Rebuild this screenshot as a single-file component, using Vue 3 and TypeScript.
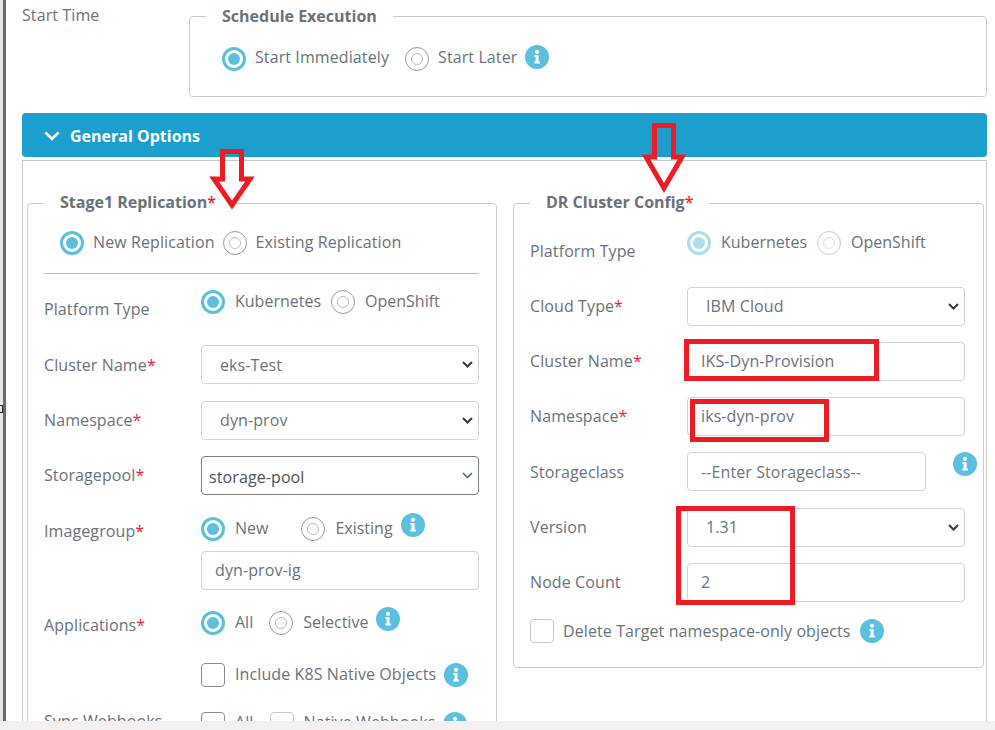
<template>
    <div class="screen">
        <span class="edge-tick"></span>
        <div class="page">
            <!-- Start time -->
            <div class="start-row">
                <div class="start-label">Start Time</div>
                <fieldset class="box box-start">
                    <legend>Schedule Execution</legend>
                    <div class="radios radios-start">
                        <label class="choice"><input v-model="schedule" type="radio" value="now" /><span>Start Immediately</span></label>
                        <label class="choice"><input v-model="schedule" type="radio" value="later" /><span>Start Later</span></label>
                        <svg class="info" viewBox="0 0 24 24"><use href="#info-glyph" /></svg>
                    </div>
                </fieldset>
            </div>

            <div class="bar">
                <svg class="chevron" viewBox="0 0 16 10"><path d="M1.5 1.5 8 8l6.5-6.5" /></svg>
                General Options
            </div>

            <div class="panel">
                <!-- Source side -->
                <fieldset class="box box-left">
                    <legend>Stage1 Replication<i>*</i></legend>
                    <div class="radios radios-tight replication">
                        <label class="choice"><input v-model="replication" type="radio" value="new" /><span>New Replication</span></label>
                        <label class="choice"><input v-model="replication" type="radio" value="existing" /><span>Existing Replication</span></label>
                    </div>
                    <hr />

                    <div class="row row-platform">
                        <div class="name name-platform">Platform Type</div>
                        <div class="radios radios-platform">
                            <label class="choice"><input v-model="platform" type="radio" value="k8s" /><span>Kubernetes</span></label>
                            <label class="choice"><input v-model="platform" type="radio" value="os" /><span>OpenShift</span></label>
                        </div>
                    </div>
                    <div class="row row-field first-field">
                        <div class="name">Cluster Name<i>*</i></div>
                        <select v-model="sourceCluster"><option>eks-Test</option></select>
                    </div>
                    <div class="row row-field">
                        <div class="name">Namespace<i>*</i></div>
                        <select v-model="sourceNamespace"><option>dyn-prov</option></select>
                    </div>
                    <div class="row row-field row-pool">
                        <div class="name">Storagepool<i>*</i></div>
                        <select v-model="storagePool" class="focused"><option>storage-pool</option></select>
                    </div>
                    <div class="row row-image">
                        <div class="name name-top">Imagegroup<i>*</i></div>
                        <div>
                            <div class="radios radios-wide">
                                <label class="choice"><input v-model="imageGroup" type="radio" value="new" /><span>New</span></label>
                                <label class="choice"><input v-model="imageGroup" type="radio" value="existing" /><span>Existing</span></label>
                                <svg class="info info-existing" viewBox="0 0 24 24"><use href="#info-glyph" /></svg>
                            </div>
                            <input class="text image-input" type="text" value="dyn-prov-ig" />
                        </div>
                    </div>
                    <div class="row row-apps">
                        <div class="name name-top">Applications<i>*</i></div>
                        <div class="radios">
                            <label class="choice"><input v-model="applications" type="radio" value="all" /><span>All</span></label>
                            <label class="choice"><input v-model="applications" type="radio" value="selective" /><span>Selective</span></label>
                            <svg class="info info-near" viewBox="0 0 24 24"><use href="#info-glyph" /></svg>
                        </div>
                    </div>
                    <div class="row row-native">
                        <div></div>
                        <label class="choice">
                            <input class="check" type="checkbox" /><span>Include K8S Native Objects</span>
                            <svg class="info info-check" viewBox="0 0 24 24"><use href="#info-glyph" /></svg>
                        </label>
                    </div>
                    <div class="row row-webhooks">
                        <div class="name">Sync Webhooks</div>
                        <div class="radios">
                            <label class="choice"><input class="check" type="checkbox" /><span>All</span></label>
                            <label class="choice">
                                <input class="check check-light" type="checkbox" /><span>Native Webhooks</span>
                                <svg class="info info-check" viewBox="0 0 24 24"><use href="#info-glyph" /></svg>
                            </label>
                        </div>
                    </div>
                </fieldset>

                <!-- DR side -->
                <fieldset class="box box-right">
                    <legend>DR Cluster Config<i>*</i></legend>
                    <div class="row dr-platform">
                        <div class="name name-dr">Platform Type</div>
                        <div class="radios radios-platform faded">
                            <label class="choice"><input v-model="drPlatform" type="radio" value="k8s" disabled /><span>Kubernetes</span></label>
                            <label class="choice"><input v-model="drPlatform" type="radio" value="os" disabled /><span>OpenShift</span></label>
                        </div>
                    </div>
                    <div class="row dr-cloud dr-up">
                        <div class="name">Cloud Type<i>*</i></div>
                        <select v-model="cloudType"><option>IBM Cloud</option></select>
                    </div>
                    <div class="row dr-field dr-up">
                        <div class="name">Cluster Name<i>*</i></div>
                        <input class="text" type="text" value="IKS-Dyn-Provision" />
                    </div>
                    <div class="row dr-field dr-up">
                        <div class="name">Namespace<i>*</i></div>
                        <input class="text" type="text" value="iks-dyn-prov" />
                    </div>
                    <div class="row dr-field">
                        <div class="name">Storageclass</div>
                        <div class="with-info">
                            <input class="text class-input" type="text" placeholder="--Enter Storageclass--" />
                            <svg class="info info-class" viewBox="0 0 24 24"><use href="#info-glyph" /></svg>
                        </div>
                    </div>
                    <div class="row dr-field dr-version dr-up">
                        <div class="name">Version</div>
                        <select v-model="version"><option>1.31</option></select>
                    </div>
                    <div class="row dr-field dr-up">
                        <div class="name">Node Count</div>
                        <input class="text" type="text" value="2" />
                    </div>
                    <label class="choice dr-delete">
                        <input class="check check-light" type="checkbox" /><span>Delete Target namespace-only objects</span>
                        <svg class="info" viewBox="0 0 24 24"><use href="#info-glyph" /></svg>
                    </label>
                </fieldset>
            </div>
        </div>
        <div class="footer"></div>

        <!-- Red markup drawn over the screenshot -->
        <svg class="markup" viewBox="0 0 995 730">
            <polygon points="222.5,151.5 241.5,151.5 241.5,179 250,179 232,205 214,179 222.5,179" />
            <polygon points="654.5,125.5 673.5,125.5 673.5,157 682,157 664,188 646,157 654.5,157" />
            <rect x="686.5" y="341.5" width="190" height="37" />
            <rect x="692.5" y="401.5" width="134" height="38" />
            <rect x="678.5" y="508.5" width="114" height="94" />
        </svg>

        <svg class="defs" width="0" height="0">
            <symbol id="info-glyph" viewBox="0 0 24 24">
                <circle cx="12" cy="12" r="12" fill="#5bc0de" />
                <circle cx="12" cy="6.8" r="2.1" fill="#fff" />
                <path d="M9.4 10h4.2v6.6h1.2v2H9.4v-2h1.2V12H9.4z" fill="#fff" />
            </symbol>
        </svg>
    </div>
</template>

<script setup lang="ts">
import { ref } from "vue";

const schedule = ref<string>("now");
const replication = ref<string>("new");
const platform = ref<string>("k8s");
const drPlatform = ref<string>("k8s");
const imageGroup = ref<string>("new");
const applications = ref<string>("all");

const sourceCluster = ref<string>("eks-Test");
const sourceNamespace = ref<string>("dyn-prov");
const storagePool = ref<string>("storage-pool");
const cloudType = ref<string>("IBM Cloud");
const version = ref<string>("1.31");
</script>

<style scoped>
.screen {
    position: relative;
    display: flex;
    flex-direction: column;
    width: 995px;
    height: 730px;
    overflow: hidden;
    background-color: #e6e6e6;
    font-family: "Open Sans", "Liberation Sans", sans-serif;
    font-size: 16px;
    line-height: 24px;
    letter-spacing: 0.1px;
    color: #69727b;
}

.edge-tick {
    position: absolute;
    left: 0;
    top: 405px;
    width: 2px;
    height: 6px;
    border: 1px solid #222;
    border-left: none;
}

.page {
    flex: 1;
    min-height: 0;
    overflow: hidden;
    margin-left: 3px;
    border-left: 3px solid #6a6a6a;
    padding: 4px 8px 0 16px;
    background-color: #fff;
}

.footer {
    height: 9px;
    background-color: #f4f0ef;
}

/* Top row */
.start-row {
    display: flex;
    align-items: flex-start;
}

.start-label {
    width: 167px;
    flex: none;
    margin-top: -1px;
}

.box {
    margin: 0;
    min-width: 0;
    border: 1px solid #c8ccd0;
    border-radius: 4px;
}

.box legend {
    padding: 0 16px;
    font-weight: 700;
    line-height: 24px;
    letter-spacing: 0;
    color: #69727b;
}

.panel legend {
    padding-bottom: 2px;
    line-height: 22px;
}

i {
    font-style: normal;
    color: #f5222d;
}

legend i {
    font-weight: 600;
}

.box-start {
    flex: 1;
    padding: 0 16px 25px;
}

.radios-start {
    margin: 19px 0 0 16px;
    gap: 18px;
}

.radios-start .choice span {
    margin-top: -2px;
}

/* Header bar */
.bar {
    display: flex;
    align-items: center;
    box-sizing: border-box;
    height: 44px;
    margin-top: 16px;
    padding: 1px 0 0 22px;
    border-radius: 4px;
    background-color: #1d9fcd;
    color: #fff;
    font-weight: 700;
    letter-spacing: 0;
}

.chevron {
    width: 16px;
    height: 10px;
    margin-right: 10px;
    fill: none;
    stroke: #fff;
    stroke-width: 2.6;
}

.panel {
    display: grid;
    grid-template-columns: 470px 471px;
    column-gap: 16px;
    align-items: start;
    margin-top: 3px;
    padding: 30px 2px 0 4px;
    border: 1px solid #c8ccd0;
    border-bottom: none;
}

.box-left {
    padding: 0 17px 0 16px;
}

.box-right {
    padding: 0 18px 24px 16px;
}

/* Radios and checkboxes */
.radios {
    display: flex;
    align-items: flex-start;
    gap: 16px;
}

.radios-tight {
    gap: 8px;
}

.radios-platform {
    gap: 10px;
    letter-spacing: 0;
}

.radios-wide {
    gap: 33px;
    letter-spacing: 0;
}

.row-apps .radios {
    letter-spacing: 0;
}

.choice {
    display: flex;
    align-items: flex-start;
    gap: 10px;
    white-space: nowrap;
}

.radios-start .choice,
.replication .choice,
.dr-delete {
    gap: 9px;
}

.choice span {
    margin-top: -1px;
}

.check + span {
    margin-top: 0;
}

.row-native .check + span {
    margin-top: -1px;
}

.row-webhooks .check + span {
    margin-top: -2px;
}

.row-webhooks .name {
    margin-top: -3px;
}

input[type="radio"] {
    appearance: none;
    flex: none;
    position: relative;
    width: 24px;
    height: 24px;
    margin: 0;
    border: 1px solid #999;
    border-radius: 50%;
    background-color: #fff;
}

input[type="radio"]::after {
    content: "";
    position: absolute;
    inset: 5px;
    border: 1px solid #bbb;
    border-radius: 50%;
}

input[type="radio"]:checked {
    border: 3px solid #5bc0de;
}

input[type="radio"]:checked::after {
    inset: 3px;
    border: none;
    background-color: #5bc0de;
}

.faded input[type="radio"] {
    opacity: 0.5;
}

.check {
    appearance: none;
    flex: none;
    width: 24px;
    height: 24px;
    margin: 0;
    border: 1px solid #8c8c8c;
    border-radius: 4px;
    background-color: #fff;
}

.check-light {
    border-color: #c6c6c6;
}

.info {
    flex: none;
    width: 24px;
    height: 24px;
}

.radios-start .info {
    margin: -2px 0 0 -8px;
}

.info-near {
    margin: -4px 0 0 -8px;
}

.info-existing {
    margin: -4px 0 0 -25px;
}

.info-check {
    margin-left: -2px;
}

.replication {
    margin: 16px 0 0 16px;
}

hr {
    height: 1px;
    margin: 18px 0 0;
    border: none;
    background-color: #c0c0c0;
}

/* Form rows */
.row {
    display: grid;
    grid-template-columns: 157px 1fr;
    align-items: center;
}

.row-platform {
    margin-top: 16px;
    align-items: start;
}

.name-platform {
    padding-top: 7px;
}

.name-dr {
    padding-top: 8px;
}

.row-field {
    margin-top: 16.5px;
}

.first-field {
    margin-top: 24px;
}

.row-pool .name {
    margin-bottom: 2px;
}

.row-image {
    margin-top: 21.5px;
    align-items: start;
}

.name-top {
    padding-top: 2px;
}

.row-apps {
    margin-top: 21px;
    align-items: start;
}

.row-native {
    margin-top: 26px;
}

.row-webhooks {
    margin-top: 25px;
    align-items: start;
}

.dr-platform {
    margin-top: 16px;
    align-items: start;
}

.dr-cloud {
    margin-top: 24px;
}

.dr-field {
    margin-top: 16px;
}

.dr-version {
    margin-top: 17px;
}

.dr-delete {
    margin-top: 17px;
}

.dr-up .name {
    margin-bottom: 2px;
}

select,
.text {
    box-sizing: border-box;
    width: 100%;
    height: 39px;
    margin: 0;
    border: 1px solid #ced4da;
    border-radius: 4px;
    background-color: #fff;
    font-family: inherit;
    font-size: 16px;
    letter-spacing: 0.1px;
    color: #69727b;
}

select {
    appearance: none;
    padding: 0 18px;
    background-image: url("data:image/svg+xml,%3Csvg xmlns='http://www.w3.org/2000/svg' viewBox='0 0 11 7'%3E%3Cpath d='M1 1l4.5 4.5L10 1' fill='none' stroke='%23343a40' stroke-width='2'/%3E%3C/svg%3E");
    background-repeat: no-repeat;
    background-position: right 5px center;
    background-size: 11px 7px;
}

select.focused {
    padding: 2px 7px 0;
    border-color: #7d7d7d;
    color: #4c5359;
    background-image: url("data:image/svg+xml,%3Csvg xmlns='http://www.w3.org/2000/svg' viewBox='0 0 11 7'%3E%3Cpath d='M1 1l4.5 4.5L10 1' fill='none' stroke='%232a6496' stroke-width='1.5'/%3E%3C/svg%3E");
}

.text {
    padding: 0 13px;
    outline: none;
}

.dr-up select {
    padding-bottom: 2px;
}

.dr-up .text {
    padding-bottom: 2px;
}

.text.image-input {
    display: block;
    margin-top: 10px;
}

.text::placeholder {
    color: #6c757d;
    opacity: 1;
}

.with-info {
    display: flex;
    align-items: flex-start;
}

.text.class-input {
    width: 239px;
}

.info-class {
    margin: 0 0 0 27px;
}

.markup {
    position: absolute;
    inset: 0;
    width: 995px;
    height: 730px;
    pointer-events: none;
    fill: none;
    stroke: #ed1c24;
    stroke-width: 5;
}

.defs {
    position: absolute;
}
</style>

<style>
html,
body {
    margin: 0;
    background-color: #fff;
}
</style>
